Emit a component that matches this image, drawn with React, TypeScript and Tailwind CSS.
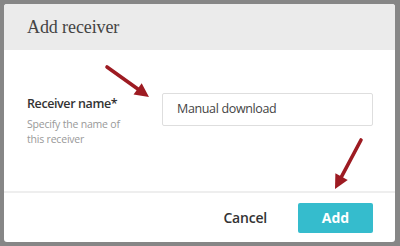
import React from 'react';

function Arrow({ x1, y1, x2, y2 }: { x1: number; y1: number; x2: number; y2: number }) {
    const dx = x2 - x1;
    const dy = y2 - y1;
    const len = Math.sqrt(dx * dx + dy * dy);
    const ux = dx / len;
    const uy = dy / len;
    const head = 14;
    const half = 7;
    const bx = x2 - ux * head;
    const by = y2 - uy * head;
    const px = -uy * half;
    const py = ux * half;
    return (
        <g>
            <line x1={x1} y1={y1} x2={bx + ux * 2} y2={by + uy * 2} stroke="#9d1b22" strokeWidth={3.6} strokeLinecap="round" />
            <polygon points={`${x2},${y2} ${bx + px},${by + py} ${bx - px},${by - py}`} fill="#9d1b22" />
        </g>
    );
}

export default function App() {
    return (
        <div className="relative w-[400px] h-[246px] bg-[#868686] pt-[4px] pl-[4px] overflow-hidden" style={{ fontFamily: '"Open Sans", sans-serif' }}>
            <div className="w-[391px] h-[238px] bg-white rounded-[3px] overflow-hidden flex flex-col">
                {/* Header */}
                <div className="h-[46px] bg-[#ebebeb] flex items-center pl-[23px] shrink-0">
                    <h2 className="text-[18px] text-[#444] pt-[1px] tracking-[-0.1px]" style={{ fontFamily: '"Liberation Serif", serif' }}>
                        Add receiver
                    </h2>
                </div>

                {/* Body */}
                <div className="flex-1 flex items-start pt-[43px] pl-[23px] pr-[22px] border-b-2 border-[#eeeeee]">
                    <div className="w-[135px] pt-[3px]">
                        <div className="text-[12.5px] font-semibold text-[#333] leading-[16px] tracking-[-0.4px]">Receiver name*</div>
                        <div className="text-[10.5px] text-[#999] leading-[15px] mt-[5px] tracking-[-0.2px]">
                            Specify the name of
                            <br />
                            this receiver
                        </div>
                    </div>
                    <div className="flex-1 h-[33px] border border-[#dedede] rounded-[2px] flex items-center pl-[14px] text-[12.5px] text-[#444] tracking-[-0.35px]">
                        Manual download
                    </div>
                </div>

                {/* Footer */}
                <div className="h-[49px] shrink-0 flex items-center justify-end pr-[22px]">
                    <button className="text-[14px] font-semibold text-[#333] mr-[31px] tracking-[-0.2px]">Cancel</button>
                    <button className="w-[75px] h-[30px] bg-[#35bccd] rounded-[2px] text-white text-[14px] font-bold">
                        Add
                    </button>
                </div>
            </div>

            <svg className="absolute inset-0 pointer-events-none" width={400} height={246}>
                <Arrow x1={107} y1={67} x2={149} y2={97} />
                <Arrow x1={361} y1={140} x2={335} y2={189} />
            </svg>
        </div>
    );
}
